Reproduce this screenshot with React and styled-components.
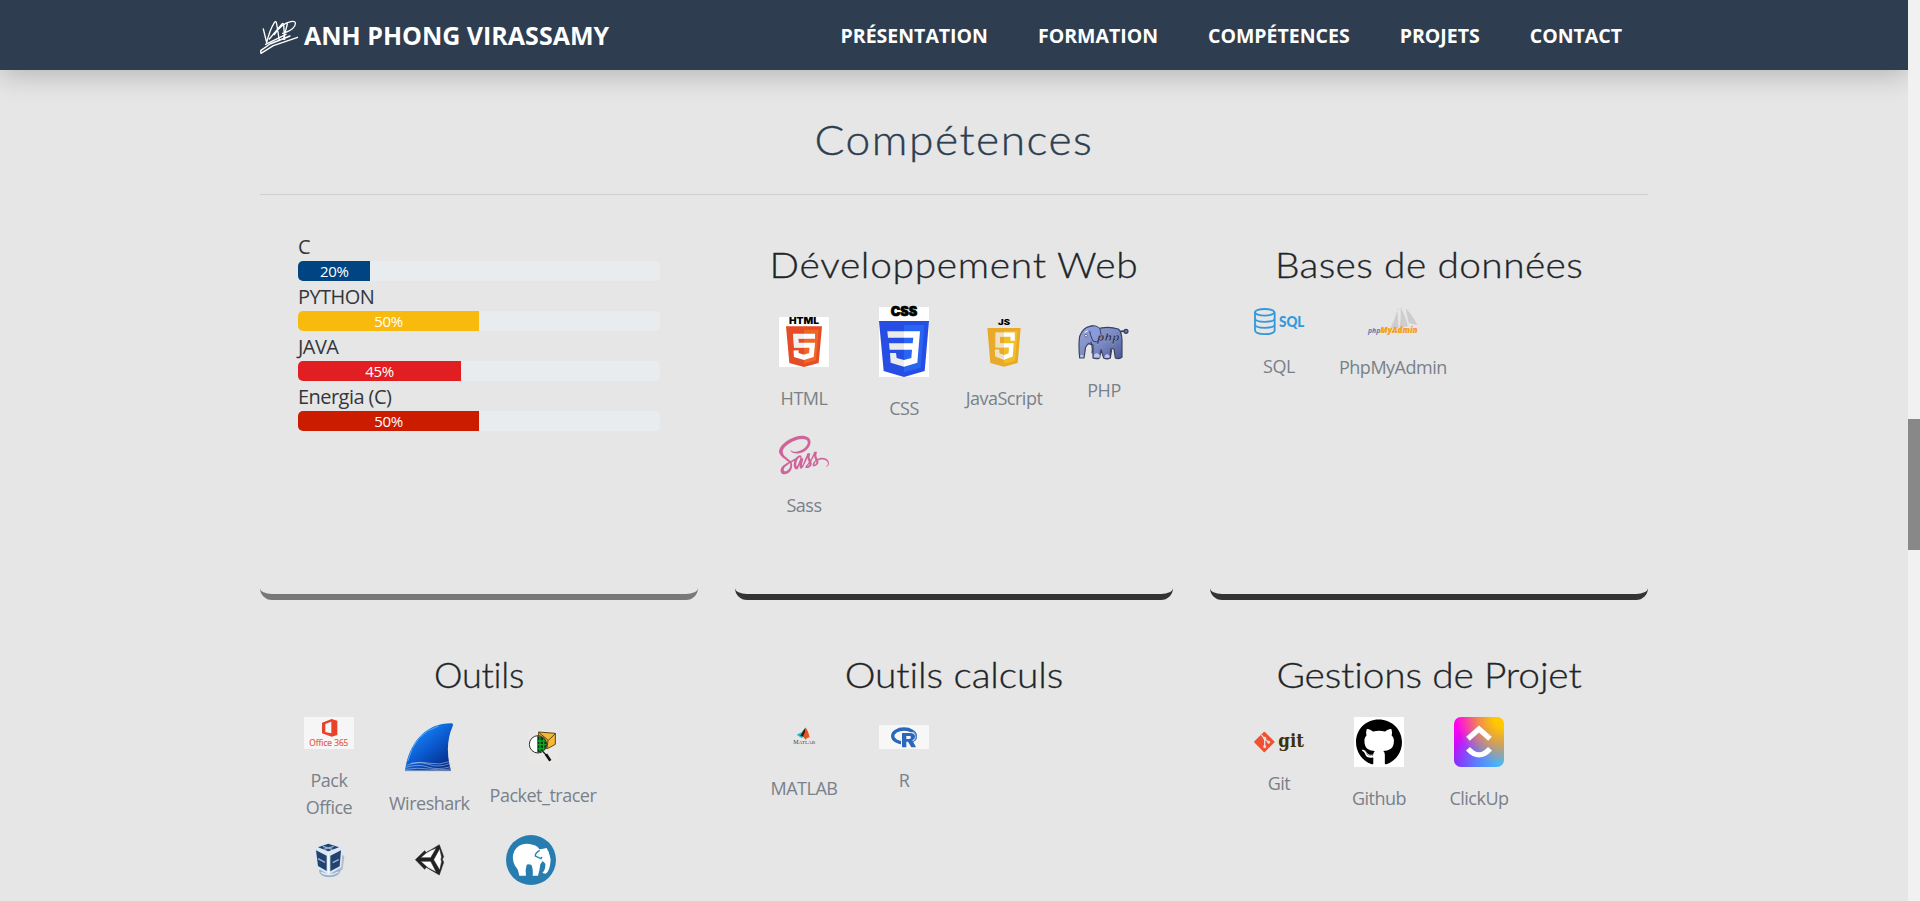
import React from 'react';
import styled, { createGlobalStyle } from 'styled-components';
import { FaSass, FaGithub } from 'react-icons/fa';

const GlobalStyle = createGlobalStyle`
  * { box-sizing: border-box; }
  html, body { margin: 0; padding: 0; background: #e6e6e6; }
  body {
    font-family: "Open Sans", "Noto Sans", sans-serif;
    font-size: 20px;
    color: #212529;
    overflow: hidden;
  }
`;

const Shell = styled.div`
  display: flex;
  height: 901px;
  overflow: hidden;
`;

const Page = styled.div`
  flex: 1;
  height: 100%;
  overflow: hidden;
`;

const ScrollTrack = styled.div`
  width: 12px;
  padding-top: 419px;
  background: #f1f1f1;
`;

const ScrollThumb = styled.div`
  height: 131px;
  background: #888;
`;

const Header = styled.header`
  height: 70px;
  background: #2e3e50;
  box-shadow: 0 5px 28px rgba(0, 0, 0, 0.22);
`;

const Bar = styled.div`
  display: flex;
  align-items: center;
  width: 1388px;
  height: 100%;
  margin: 0 auto;
  padding: 1px 26px 0 0;
`;

const Brand = styled.a`
  display: flex;
  align-items: center;
  gap: 6px;
  margin-right: auto;
  font-size: 25px;
  font-weight: 700;
  line-height: 34px;
  color: #fff;
  white-space: nowrap;

  svg { margin-top: 4px; }
`;

const BrandName = styled.span`
  margin-top: -1px;
`;

const Nav = styled.nav`
  display: flex;
  gap: 50px;
`;

const NavLink = styled.a`
  font-size: 19.5px;
  font-weight: 700;
  line-height: 28px;
  color: #fff;
`;

const Section = styled.section`
  width: 1388px;
  margin: 0 auto;
  padding-top: 46px;
`;

const Title = styled.h1`
  margin: 0 0 30px;
  font: 300 41px/48px Lato, sans-serif;
  letter-spacing: 1.4px;
  text-align: center;
  color: #2c3e50;
  -webkit-text-stroke: 0.35px currentColor;
  transform: scaleX(1.08);
`;

const Divider = styled.hr`
  height: 1px;
  margin: 0 0 23px;
  border: 0;
  background: #cfcfcf;
`;

const Cards = styled.div`
  display: grid;
  grid-template-columns: repeat(3, 438px);
  grid-auto-rows: 382px;
  gap: 28px 37px;
`;

const Card = styled.article`
  padding: 0 19px;
  border-bottom: 6px solid ${(p) => (p.$muted ? '#777877' : '#323332')};
  border-radius: 12px;
`;

const CardTitle = styled.h2`
  margin: 0 0 22px;
  padding-top: 25px;
  font: 300 36px/42px Lato, sans-serif;
  letter-spacing: ${(p) => p.$tracking}px;
  text-align: center;
  white-space: nowrap;
  -webkit-text-stroke: 0.3px currentColor;
  transform: scaleX(${(p) => p.$stretch || 1.08});
`;

const Items = styled.div`
  display: flex;
  flex-wrap: wrap;
  align-items: center;
`;

const Item = styled.figure`
  display: flex;
  flex-direction: column;
  align-items: center;
  min-width: 100px;
  margin: 0;
  padding: 0 10px 14px;
`;

const Caption = styled.figcaption`
  max-width: ${(p) => (p.$narrow ? '60px' : 'none')};
  margin-top: 18px;
  font-size: 18px;
  font-weight: 400;
  line-height: 27px;
  letter-spacing: -0.5px;
  text-align: center;
  color: #78818a;
`;

const Logo = styled.svg`
  display: block;
  width: 50px;
  height: ${(p) => p.$h}px;
  overflow: visible;
`;

const Languages = styled.div`
  padding: 13px 19px 0;
`;

const Language = styled.div`
  padding-top: 2px;
  font-weight: 400;
  line-height: 28px;
  letter-spacing: -0.55px;
  color: #33373b;
`;

const Progress = styled.div`
  height: 20px;
  border-radius: 5px;
  overflow: hidden;
  background: #e9ecef;
`;

const Fill = styled.div`
  width: ${(p) => p.$value}%;
  height: 100%;
  font-size: 15px;
  font-weight: 400;
  line-height: 20px;
  letter-spacing: -0.4px;
  text-align: center;
  color: #fff;
  background: ${(p) => p.$color};
`;

const Signature = () => (
  <svg width="38" height="36" viewBox="0 0 114 108" fill="none" stroke="#fff" strokeLinecap="round" strokeLinejoin="round">
    <path d="M10 27 20 68Q30 28 43 8 48 0 50 12L58 62M28 57 66 12Q70 8 71 14L74 58M70 58 82 12M43 44Q65 10 92 5 112 1 104 18 96 32 68 40" strokeWidth="4" />
    <path d="M17 73 78 43M3 100 40 77 113 52M3 100 2 92 30 72 90 48" strokeWidth="4.2" />
  </svg>
);

const HtmlLogo = () => (
  <Logo $h={50} viewBox="0 0 150 150">
    <path fill="#fff" d="M0 0h150v150H0z" />
    <text x="30" y="20" textLength="90" lengthAdjust="spacingAndGlyphs" fontFamily="Inter" fontWeight="900" fontSize="27">HTML</text>
    <path fill="#e44d26" d="M21 28h108l-10 110-44 12-44-12z" />
    <path fill="#f16529" d="M75 38h44l-8 92-36 10z" />
    <path fill="none" stroke="#fff" strokeWidth="15" d="M108 58H50l2 27h48l-3 29-22 7-23-7-1-14" />
    <path fill="#e5e5e5" opacity=".5" d="M42 51h33v15H58l1 12h16v15H45z" />
  </Logo>
);

const CssLogo = () => (
  <Logo $h={70} viewBox="0 0 150 210">
    <path fill="#fff" d="M0 0h150v210H0z" />
    <text x="35" y="28" textLength="80" lengthAdjust="spacingAndGlyphs" fontFamily="Inter" fontWeight="900" fontSize="38" stroke="#000" strokeWidth="2">CSS</text>
    <path fill="#264de4" d="M0 42h150l-13 150-62 18-61-18z" />
    <path fill="#2965f1" d="M75 54h61l-11 128-50 14z" />
    <path fill="#ebebeb" d="M25 73h50v19H27zM30 109h45v19H32zM33 138h18l2 15 22 6v20l-40-12z" />
    <path fill="#fff" d="M75 73h48l-8 94-40 12v-20l22-6 2-25H75v-19h26l2-17H75z" />
  </Logo>
);

const JsLogo = () => (
  <Logo $h={50} viewBox="0 0 150 150">
    <text x="57" y="24" textLength="36" lengthAdjust="spacingAndGlyphs" fontFamily="Inter" fontWeight="900" fontSize="23">JS</text>
    <path fill="#e9a92b" d="M25 33h100l-9 105-41 11-41-11z" />
    <path fill="#f0bf25" d="M75 42h41l-8 89-33 9z" />
    <path fill="none" stroke="#fff" strokeWidth="13" d="M101 71V53H56v32h41l-2 29-20 7-20-7-1-16" />
    <path fill="#d6ba79" opacity=".45" d="M49 47h26v12H62v20h13v12H50zM48 98h13v12l14 5v12l-26-7z" />
  </Logo>
);

const PhpLogo = () => (
  <Logo $h={34} viewBox="0 0 150 102">
    <defs>
      <linearGradient id="phpBody" x1="0" x2="1" y1="0" y2="1">
        <stop stopColor="#98a8df" /><stop offset=".55" stopColor="#7a87c0" /><stop offset="1" stopColor="#4d5892" />
      </linearGradient>
    </defs>
    <g stroke="#39405f" strokeWidth="3.5" strokeLinejoin="round">
      <path fill="none" d="M122 22q6-5 16-3" strokeWidth="5" />
      <circle cx="141" cy="19" r="6" fill="#6271ad" />
      <path fill="url(#phpBody)" d="M52 12Q86 2 118 12q10 8 11 34v50q-8 8-20 3l-4-26q-7-5-10 0l-1 26q-10 5-20 0L66 74l-4 24q-8 6-20 1V60L28 56l-8 10-5 33H2Q-2 60 2 34 12 8 32 4 45-2 52 12z" />
      <path fill="#8a9ade" d="M32 5Q50-2 62 10q8 24-2 32-4 12-18 6-8-16-10-30" strokeWidth="3" />
      <path fill="none" d="M35 50q7 14 4 35M98 73l-4 26" />
    </g>
    <path stroke="#fff" strokeWidth="3" d="M17 23l9-6" /><circle cx="21" cy="32" r="4" fill="#fff" stroke="#39405f" strokeWidth="2" />
    <path fill="#bbc7ef" d="M44 97q2-15 11-12t7 13zM76 98q3-13 10-10t6 10zM4 90h9v7H4z" />
    <text x="54" y="48" textLength="68" lengthAdjust="spacingAndGlyphs" fontFamily="Open Sans" fontStyle="italic" fontWeight="700" fontSize="33" fill="#252a43" stroke="#aab6df" strokeWidth="1">php</text>
  </Logo>
);

const SassLogo = () => (
  <Logo as={FaSass} $h={38} color="#cf649a" viewBox="0 18 640 476" preserveAspectRatio="none" />
);

const SqlLogo = () => (
  <Logo $h={27} viewBox="0 0 150 81">
    <g fill="none" stroke="#3498db" strokeWidth="5.5">
      <ellipse cx="32" cy="13" rx="29" ry="10" />
      <path d="M3 13v54c0 15 59 15 59 0V13M3 31c0 14 59 14 59 0M3 49c0 14 59 14 59 0" />
    </g>
    <text x="75" y="58" textLength="76" lengthAdjust="spacingAndGlyphs" fontFamily="Lato" fontWeight="900" fontSize="47" fill="#3498db">SQL</text>
  </Logo>
);

const PmaLogo = () => (
  <Logo $h={29} viewBox="0 0 150 87">
    <path fill="#cdcdcd" d="M68 62Q80 40 88 10l4 54zM95 64Q100 30 98 2q12 20 22 55zM113 4q20 20 35 50l-26-6z" />
    <path fill="none" stroke="#d6d6d6" strokeWidth="2" d="M84 8l22-7" />
    <text x="0" y="77" textLength="37" lengthAdjust="spacingAndGlyphs" fontFamily="Open Sans" fontStyle="italic" fontWeight="700" fontSize="21" fill="#6c78af">php</text>
    <text x="37" y="79" textLength="112" lengthAdjust="spacingAndGlyphs" fontFamily="Open Sans" fontStyle="italic" fontWeight="800" fontSize="28" fill="#f89c0e">MyAdmin</text>
  </Logo>
);

const OfficeLogo = () => (
  <Logo $h={32} viewBox="0 0 150 96">
    <path fill="#f6f6f6" d="M0 0h150v96H0z" />
    <path fill="#e8432a" fillRule="evenodd" d="M54 17l29-11 17 5v43l-17 5-29-10zm10 4v24l18 4V14z" />
    <text x="16" y="88" textLength="117" lengthAdjust="spacingAndGlyphs" fontFamily="Open Sans" fontSize="29" fill="#e8563f" stroke="#e8563f" strokeWidth=".6">Office 365</text>
  </Logo>
);

const WiresharkLogo = () => (
  <Logo $h={50} viewBox="0 0 150 150">
    <defs>
      <linearGradient id="fin" x1=".2" x2=".85" y1=".1" y2=".9">
        <stop stopColor="#1a8cf5" /><stop offset=".5" stopColor="#0b5ad1" /><stop offset="1" stopColor="#032e87" />
      </linearGradient>
    </defs>
    <path fill="url(#fin)" d="M3 146C14 66 62 3 143 4q6 1 3 9-26 58-5 133z" />
    <path fill="none" stroke="#50a9f8" strokeWidth="3" d="M11 118Q31 34 104 12" />
    <path fill="none" stroke="#c6d8ed" strokeWidth="2" opacity=".8" d="M8 130q35-14 66-3t63-2M6 136q38-11 66-1t68-1M5 142q38-6 68-1t67 0M20 124q32-6 60 0t55-5" />
    <path stroke="#bfc6d0" strokeWidth="2" d="M3 147h138" />
  </Logo>
);

const PacketTracerLogo = () => (
  <Logo $h={34} viewBox="0 0 150 102">
    <path fill="#e9e8e7" d="M30 0h90v98H30z" />
    <path fill="#f6b834" stroke="#59451b" strokeWidth="3" d="M62 6l50 4v33l-24 13-26-8z" />
    <path fill="none" stroke="#59451b" strokeWidth="3" d="M62 7l29 24 21-20M90 31l-3 24" />
    <circle cx="60" cy="43" r="25" fill="#fff" />
    <path fill="#063f17" d="M58 18q27 2 27 25T58 68z" />
    <path fill="none" stroke="#12a82a" strokeWidth="4" d="M66 22v42M77 27v34M60 33h22M60 44h24M60 56h20" />
    <circle cx="60" cy="43" r="26" fill="none" stroke="#333" strokeWidth="3" />
    <path stroke="#111" strokeWidth="4" d="M75 65l11 12" /><path stroke="#111" strokeWidth="8" d="M84 73l13 19" />
  </Logo>
);

const VirtualBoxLogo = () => (
  <Logo $h={36} viewBox="0 0 150 108">
    <path fill="#8b9fb8" opacity=".6" d="M98 30l20 12-5 40-20 14z" />
    <path fill="#9db3cd" d="M42 84q32-14 65 0-3 22-34 22T42 84z" /><path fill="none" stroke="#e5edf5" strokeWidth="4" d="M48 91q24 14 52-1" />
    <path fill="#dce7f4" d="M70 0l44 16-5 60-38 22-37-22-7-60z" />
    <path fill="#22436f" d="M70 5l32 11-32 12-31-12zM33 25l32 16v46L39 72zM76 41l32-16-4 48-28 15z" />
    <path fill="none" stroke="#9fb7d5" strokeWidth="4" d="M54 13l28 9M86 13l-30 9M39 50l21 11M83 62l18-9" />
    <path stroke="#f3f8fd" strokeWidth="4" d="M70 33v62" />
  </Logo>
);

const UnityLogo = () => (
  <Logo $h={34} viewBox="0 0 150 102">
    <path fill="#fff" d="M33 50l70-41v82z" />
    <path fill="#222" stroke="#222" strokeWidth="1.5" fillRule="evenodd" d="M28 50l28-27 5 6L100 5l13 36-4 8 4 9-13 38-39-23-5 6zm16-6h30l17-29-25 10zm0 11l22 20 25 13-17-33zm39-5l18 31 6-25-2-7 2-7-6-25z" />
  </Logo>
);

const MampLogo = () => (
  <Logo $h={50} viewBox="0 0 150 150">
    <circle cx="75" cy="75" r="75" fill="#277db0" />
    <path fill="#fff" d="M40 122Q36 100 27 92 15 70 25 48 40 23 70 27q24 3 30 16l12-1q18 1 22 32-2 34-15 42l-10-2q10-10 9-28l-8-8-7 10q-2 18-7 34H80q2-20-4-33-10-3-14 0-5 14-2 33z" />
    <path fill="none" stroke="#277db0" strokeWidth="4" d="M101 46q-14 8-13 17l17 8 3-5" />
    <path fill="#fff" d="M104 43l18-4 7 14-17 9z" />
  </Logo>
);

const MatlabLogo = () => (
  <Logo $h={40} viewBox="0 0 150 120">
    <path fill="#25b3bd" d="M53 53l15-7 9-12 5 12-13 18z" />
    <path fill="#3b1510" d="M64 57l12-20 4-4v34l-8-9z" />
    <path fill="#e8521f" d="M72 58q8-15 8-27 8 12 12 30-10 1-12 7z" />
    <text x="43" y="81" textLength="66" lengthAdjust="spacingAndGlyphs" fontFamily="Liberation Serif" fontSize="17" fill="#444">M<tspan fontSize="15">ATLAB</tspan></text>
  </Logo>
);

const RLogo = () => (
  <Logo $h={24} viewBox="0 0 150 72">
    <path fill="#f7f7f7" d="M0 0h150v72H0z" />
    <ellipse cx="75" cy="33" rx="34" ry="21" fill="none" stroke="#2a68bc" strokeWidth="10" />
    <path fill="#f7f7f7" d="M66 22h38q14 10 2 24l-6 3 9 18H66z" />
    <path fill="#2a68bc" fillRule="evenodd" d="M69 24h27q13 2 12 12 0 8-8 10l11 21H97L87 50h-5v17H69zm13 9v9h9q5-1 5-5t-5-4z" />
    <path fill="none" stroke="#5388cd" strokeWidth="4" d="M102 18q15 12 7 28" />
  </Logo>
);

const GitLogo = () => (
  <Logo $h={20} viewBox="0 1 150 61" preserveAspectRatio="none">
    <path fill="#f05133" stroke="#f05133" strokeWidth="5" strokeLinejoin="round" d="M31 3l28 28-28 29L3 31z" />
    <path fill="none" stroke="#eadedb" strokeWidth="4" d="M22 10l10 12v24M32 22l12 10" />
    <circle cx="32" cy="20" r="4.5" fill="#eadedb" /><circle cx="32" cy="46" r="4.5" fill="#eadedb" /><circle cx="44" cy="32" r="4.5" fill="#eadedb" />
    <text x="73" y="46" textLength="77" lengthAdjust="spacingAndGlyphs" fontFamily="DejaVu Serif" fontWeight="700" fontSize="57" fill="#413008">git</text>
  </Logo>
);

const GithubTile = styled.div`
  width: 50px;
  height: 50px;
  padding: 2px;
  background: #fff;
`;

const GithubLogo = () => (
  <GithubTile><FaGithub size={46} color="#000" viewBox="0 8 496 486" /></GithubTile>
);

const ClickUpTile = styled.div`
  width: 50px;
  height: 50px;
  border-radius: 7px;
  background:
    radial-gradient(circle at 100% 0%, #ffc800 15%, rgba(255, 170, 30, 0.75) 38%, transparent 68%),
    radial-gradient(circle at 100% 100%, #45b8fa 8%, rgba(75, 165, 250, 0.7) 40%, transparent 75%),
    radial-gradient(circle at 0% 0%, #ff02f0 15%, transparent 75%),
    #8020ff;
`;

const ClickUpLogo = () => (
  <ClickUpTile>
    <Logo $h={50} viewBox="0 0 150 150" fill="none" stroke="#fff" strokeWidth="16">
      <path d="M42 65l33-29 33 29M42 95q33 37 66 0" />
    </Logo>
  </ClickUpTile>
);

const languages = [
  ['C', 20, '#004482'],
  ['PYTHON', 50, '#f9ba0e'],
  ['JAVA', 45, '#e11f22'],
  ['Energia (C)', 50, '#cc1c00'],
];

const groups = [
  { title: 'Développement Web', tracking: 0.65, items: [['HTML', HtmlLogo], ['CSS', CssLogo], ['JavaScript', JsLogo], ['PHP', PhpLogo], ['Sass', SassLogo]] },
  { title: 'Bases de données', tracking: 0.35, items: [['SQL', SqlLogo], ['PhpMyAdmin', PmaLogo]] },
  { title: 'Outils', tracking: -0.25, stretch: 1, items: [['Pack Office', OfficeLogo], ['Wireshark', WiresharkLogo], ['Packet_tracer', PacketTracerLogo], ['VirtualBox', VirtualBoxLogo], ['Unity', UnityLogo], ['MAMP', MampLogo]] },
  { title: 'Outils calculs', tracking: -0.1, items: [['MATLAB', MatlabLogo], ['R', RLogo]] },
  { title: 'Gestions de Projet', tracking: -0.15, items: [['Git', GitLogo], ['Github', GithubLogo], ['ClickUp', ClickUpLogo]] },
];

export default function App() {
  return (
    <>
      <GlobalStyle />
      <Shell>
        <Page>
          <Header>
            <Bar>
              <Brand><Signature /><BrandName>ANH PHONG VIRASSAMY</BrandName></Brand>
              <Nav>
                {['PRÉSENTATION', 'FORMATION', 'COMPÉTENCES', 'PROJETS', 'CONTACT'].map((name) => (
                  <NavLink key={name}>{name}</NavLink>
                ))}
              </Nav>
            </Bar>
          </Header>
          <Section>
            <Title>Compétences</Title>
            <Divider />
            <Cards>
              <Card $muted>
                <Languages>
                  {languages.map(([name, value, color]) => (
                    <React.Fragment key={name}>
                      <Language>{name}</Language>
                      <Progress><Fill $value={value} $color={color}>{value}%</Fill></Progress>
                    </React.Fragment>
                  ))}
                </Languages>
              </Card>
              {groups.map(({ title, tracking, stretch, items }) => (
                <Card key={title}>
                  <CardTitle $tracking={tracking} $stretch={stretch}>{title}</CardTitle>
                  <Items>
                    {items.map(([name, Icon]) => (
                      <Item key={name}>
                        <Icon />
                        <Caption $narrow={name === 'Pack Office'}>{name}</Caption>
                      </Item>
                    ))}
                  </Items>
                </Card>
              ))}
            </Cards>
          </Section>
        </Page>
        <ScrollTrack><ScrollThumb /></ScrollTrack>
      </Shell>
    </>
  );
}
